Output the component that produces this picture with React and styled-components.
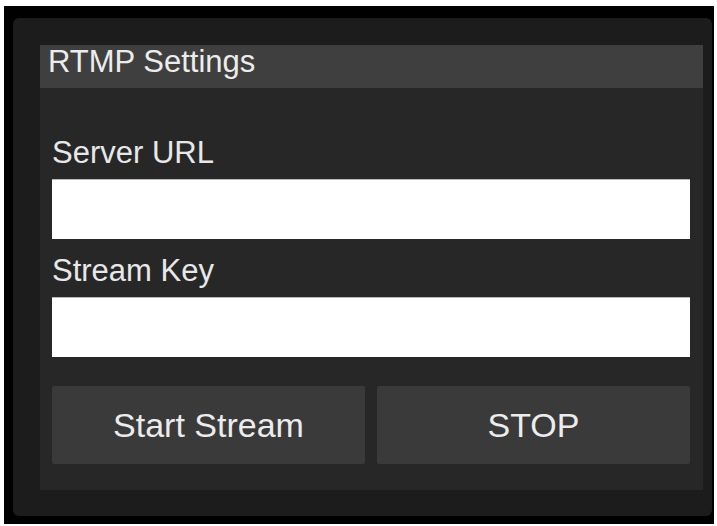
import styled, { createGlobalStyle } from "styled-components";

const GlobalStyle = createGlobalStyle`
    html, body {
        margin: 0;
        padding: 0;
        background: #ffffff;
    }

    * {
        box-sizing: border-box;
    }
`;

export default function App() {
    return (
        <>
            <GlobalStyle />
            <Frame>
                <Panel>
                    <Header>RTMP Settings</Header>
                    <Body>
                        <Field>
                            <Label htmlFor="server-url">Server URL</Label>
                            <Input id="server-url" type="text" />
                        </Field>
                        <Field>
                            <Label htmlFor="stream-key">Stream Key</Label>
                            <Input id="stream-key" type="password" />
                        </Field>
                        <Buttons>
                            <Button>Start Stream</Button>
                            <Button>STOP</Button>
                        </Buttons>
                    </Body>
                </Panel>
            </Frame>
        </>
    );
}

const Frame = styled.div`
    margin: 6px 3px 0 4px;
    height: 518px;
    background: #000000;
    padding: 12px 2px 8px 9px;
`;

const Panel = styled.section`
    height: 100%;
    background: #1c1c1c;
    border-radius: 6px;
    padding: 27px 9px 26px 27px;
    display: flex;
    flex-direction: column;
`;

const Header = styled.h2`
    margin: 0;
    height: 43px;
    padding: 0 8px;
    background: #3f3f3f;
    font-family: "Liberation Sans", Arial, sans-serif;
    font-weight: normal;
    font-size: 31px;
    line-height: 33px;
    color: #ececec;
`;

const Body = styled.div`
    flex: 1;
    background: #272727;
    padding: 48px 13px 26px 12px;
    display: flex;
    flex-direction: column;
`;

const Field = styled.div`
    display: flex;
    flex-direction: column;
    gap: 9px;
    margin-bottom: 15px;
`;

const Label = styled.label`
    font-family: "Liberation Sans", Arial, sans-serif;
    font-size: 31px;
    line-height: 34px;
    color: #e8e8e8;
`;

const Input = styled.input`
    height: 60px;
    width: 100%;
    border: none;
    border-top: 1px solid #b8b8b8;
    background: #ffffff;
    padding: 0 10px;
    font-size: 24px;
    outline: none;
`;

const Buttons = styled.div`
    margin-top: 14px;
    display: grid;
    grid-template-columns: 1fr 1fr;
    gap: 12px;
`;

const Button = styled.button`
    height: 78px;
    border: none;
    border-radius: 2px;
    background: #3a3a3a;
    font-family: "Liberation Sans", Arial, sans-serif;
    font-size: 34px;
    color: #ececec;
    cursor: pointer;
`;
